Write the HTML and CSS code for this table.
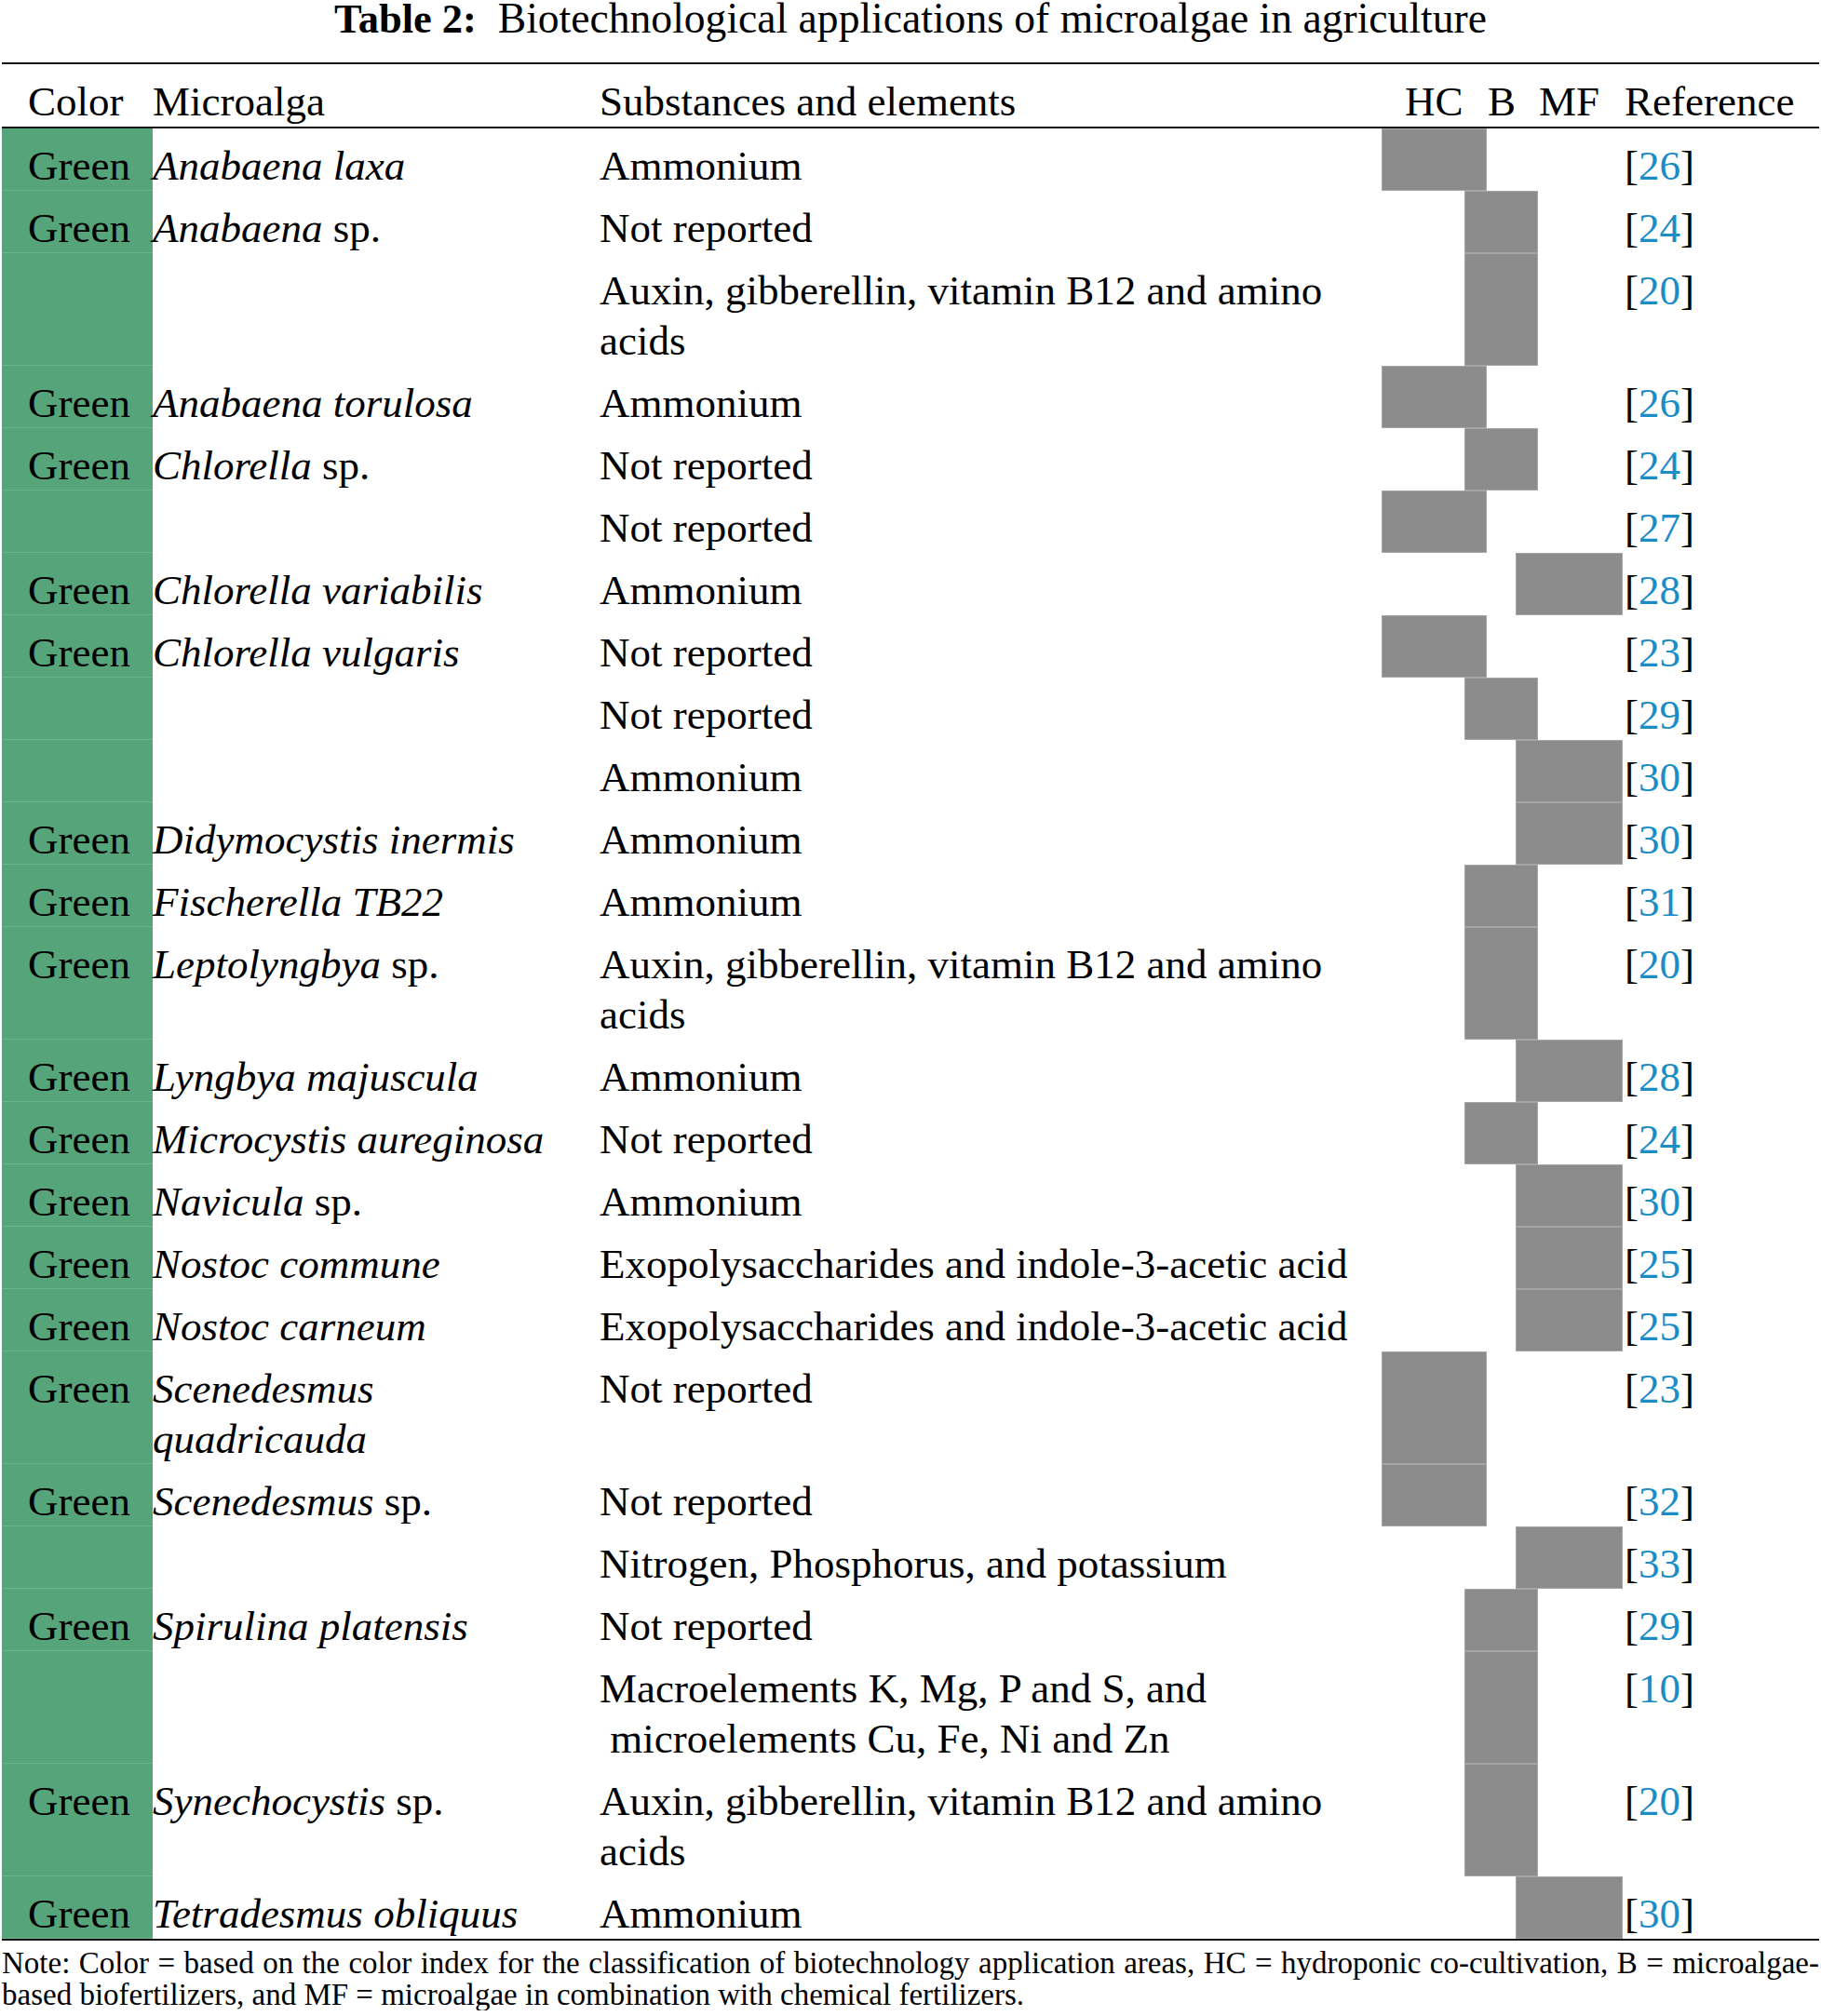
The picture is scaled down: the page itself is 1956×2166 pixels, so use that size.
FILE: index.html
```html
<!DOCTYPE html>
<html lang="en">
<head>
<meta charset="utf-8">
<title>Table 2: Biotechnological applications of microalgae in agriculture</title>
<link rel="stylesheet" href="styles.css">
</head>
<body>
<div class="page">
  <div class="caption"><b class="cap-label">Table 2:</b>&nbsp; Biotechnological applications of microalgae in agriculture</div>
  <div class="table">
    <div class="row head">
      <div class="cell c-color">Color</div>
      <div class="cell c-alga">Microalga</div>
      <div class="cell c-sub">Substances and elements</div>
      <div class="cell c-marks head-marks"><span>HC</span><span>B</span><span>MF</span></div>
      <div class="cell c-ref">Reference</div>
    </div>

    <div class="row">
      <div class="cell c-color green">Green</div>
      <div class="cell c-alga"><i>Anabaena laxa</i></div>
      <div class="cell c-sub">Ammonium</div>
      <div class="cell c-marks"><div class="mark hc"></div></div>
      <div class="cell c-ref">[<span class="num">26</span>]</div>
    </div>
    <div class="row">
      <div class="cell c-color green">Green</div>
      <div class="cell c-alga"><i>Anabaena</i> sp.</div>
      <div class="cell c-sub">Not reported</div>
      <div class="cell c-marks"><div class="mark b"></div></div>
      <div class="cell c-ref">[<span class="num">24</span>]</div>
    </div>
    <div class="row">
      <div class="cell c-color green"></div>
      <div class="cell c-alga"></div>
      <div class="cell c-sub">Auxin, gibberellin, vitamin B12 and amino acids</div>
      <div class="cell c-marks"><div class="mark b"></div></div>
      <div class="cell c-ref">[<span class="num">20</span>]</div>
    </div>
    <div class="row">
      <div class="cell c-color green">Green</div>
      <div class="cell c-alga"><i>Anabaena torulosa</i></div>
      <div class="cell c-sub">Ammonium</div>
      <div class="cell c-marks"><div class="mark hc"></div></div>
      <div class="cell c-ref">[<span class="num">26</span>]</div>
    </div>
    <div class="row">
      <div class="cell c-color green">Green</div>
      <div class="cell c-alga"><i>Chlorella</i> sp.</div>
      <div class="cell c-sub">Not reported</div>
      <div class="cell c-marks"><div class="mark b"></div></div>
      <div class="cell c-ref">[<span class="num">24</span>]</div>
    </div>
    <div class="row">
      <div class="cell c-color green"></div>
      <div class="cell c-alga"></div>
      <div class="cell c-sub">Not reported</div>
      <div class="cell c-marks"><div class="mark hc"></div></div>
      <div class="cell c-ref">[<span class="num">27</span>]</div>
    </div>
    <div class="row">
      <div class="cell c-color green">Green</div>
      <div class="cell c-alga"><i>Chlorella variabilis</i></div>
      <div class="cell c-sub">Ammonium</div>
      <div class="cell c-marks"><div class="mark mf"></div></div>
      <div class="cell c-ref">[<span class="num">28</span>]</div>
    </div>
    <div class="row">
      <div class="cell c-color green">Green</div>
      <div class="cell c-alga"><i>Chlorella vulgaris</i></div>
      <div class="cell c-sub">Not reported</div>
      <div class="cell c-marks"><div class="mark hc"></div></div>
      <div class="cell c-ref">[<span class="num">23</span>]</div>
    </div>
    <div class="row">
      <div class="cell c-color green"></div>
      <div class="cell c-alga"></div>
      <div class="cell c-sub">Not reported</div>
      <div class="cell c-marks"><div class="mark b"></div></div>
      <div class="cell c-ref">[<span class="num">29</span>]</div>
    </div>
    <div class="row">
      <div class="cell c-color green"></div>
      <div class="cell c-alga"></div>
      <div class="cell c-sub">Ammonium</div>
      <div class="cell c-marks"><div class="mark mf"></div></div>
      <div class="cell c-ref">[<span class="num">30</span>]</div>
    </div>
    <div class="row">
      <div class="cell c-color green">Green</div>
      <div class="cell c-alga"><i>Didymocystis inermis</i></div>
      <div class="cell c-sub">Ammonium</div>
      <div class="cell c-marks"><div class="mark mf"></div></div>
      <div class="cell c-ref">[<span class="num">30</span>]</div>
    </div>
    <div class="row">
      <div class="cell c-color green">Green</div>
      <div class="cell c-alga"><i>Fischerella TB22</i></div>
      <div class="cell c-sub">Ammonium</div>
      <div class="cell c-marks"><div class="mark b"></div></div>
      <div class="cell c-ref">[<span class="num">31</span>]</div>
    </div>
    <div class="row">
      <div class="cell c-color green">Green</div>
      <div class="cell c-alga"><i>Leptolyngbya</i> sp.</div>
      <div class="cell c-sub">Auxin, gibberellin, vitamin B12 and amino acids</div>
      <div class="cell c-marks"><div class="mark b"></div></div>
      <div class="cell c-ref">[<span class="num">20</span>]</div>
    </div>
    <div class="row">
      <div class="cell c-color green">Green</div>
      <div class="cell c-alga"><i>Lyngbya majuscula</i></div>
      <div class="cell c-sub">Ammonium</div>
      <div class="cell c-marks"><div class="mark mf"></div></div>
      <div class="cell c-ref">[<span class="num">28</span>]</div>
    </div>
    <div class="row">
      <div class="cell c-color green">Green</div>
      <div class="cell c-alga"><i>Microcystis aureginosa</i></div>
      <div class="cell c-sub">Not reported</div>
      <div class="cell c-marks"><div class="mark b"></div></div>
      <div class="cell c-ref">[<span class="num">24</span>]</div>
    </div>
    <div class="row">
      <div class="cell c-color green">Green</div>
      <div class="cell c-alga"><i>Navicula</i> sp.</div>
      <div class="cell c-sub">Ammonium</div>
      <div class="cell c-marks"><div class="mark mf"></div></div>
      <div class="cell c-ref">[<span class="num">30</span>]</div>
    </div>
    <div class="row">
      <div class="cell c-color green">Green</div>
      <div class="cell c-alga"><i>Nostoc commune</i></div>
      <div class="cell c-sub">Exopolysaccharides and indole-3-acetic acid</div>
      <div class="cell c-marks"><div class="mark mf"></div></div>
      <div class="cell c-ref">[<span class="num">25</span>]</div>
    </div>
    <div class="row">
      <div class="cell c-color green">Green</div>
      <div class="cell c-alga"><i>Nostoc carneum</i></div>
      <div class="cell c-sub">Exopolysaccharides and indole-3-acetic acid</div>
      <div class="cell c-marks"><div class="mark mf"></div></div>
      <div class="cell c-ref">[<span class="num">25</span>]</div>
    </div>
    <div class="row">
      <div class="cell c-color green">Green</div>
      <div class="cell c-alga"><i>Scenedesmus quadricauda</i></div>
      <div class="cell c-sub">Not reported</div>
      <div class="cell c-marks"><div class="mark hc"></div></div>
      <div class="cell c-ref">[<span class="num">23</span>]</div>
    </div>
    <div class="row">
      <div class="cell c-color green">Green</div>
      <div class="cell c-alga"><i>Scenedesmus</i> sp.</div>
      <div class="cell c-sub">Not reported</div>
      <div class="cell c-marks"><div class="mark hc"></div></div>
      <div class="cell c-ref">[<span class="num">32</span>]</div>
    </div>
    <div class="row">
      <div class="cell c-color green"></div>
      <div class="cell c-alga"></div>
      <div class="cell c-sub">Nitrogen, Phosphorus, and potassium</div>
      <div class="cell c-marks"><div class="mark mf"></div></div>
      <div class="cell c-ref">[<span class="num">33</span>]</div>
    </div>
    <div class="row">
      <div class="cell c-color green">Green</div>
      <div class="cell c-alga"><i>Spirulina platensis</i></div>
      <div class="cell c-sub">Not reported</div>
      <div class="cell c-marks"><div class="mark b"></div></div>
      <div class="cell c-ref">[<span class="num">29</span>]</div>
    </div>
    <div class="row">
      <div class="cell c-color green"></div>
      <div class="cell c-alga"></div>
      <div class="cell c-sub">Macroelements K, Mg, P and S, and<br>&nbsp;microelements Cu, Fe, Ni and Zn</div>
      <div class="cell c-marks"><div class="mark b"></div></div>
      <div class="cell c-ref">[<span class="num">10</span>]</div>
    </div>
    <div class="row">
      <div class="cell c-color green">Green</div>
      <div class="cell c-alga"><i>Synechocystis</i> sp.</div>
      <div class="cell c-sub">Auxin, gibberellin, vitamin B12 and amino acids</div>
      <div class="cell c-marks"><div class="mark b"></div></div>
      <div class="cell c-ref">[<span class="num">20</span>]</div>
    </div>
    <div class="row">
      <div class="cell c-color green">Green</div>
      <div class="cell c-alga"><i>Tetradesmus obliquus</i></div>
      <div class="cell c-sub">Ammonium</div>
      <div class="cell c-marks"><div class="mark mf"></div></div>
      <div class="cell c-ref">[<span class="num">30</span>]</div>
    </div>
  </div>
  <div class="note">
    <div class="note-line first">Note: Color = based on the color index for the classification of biotechnology application areas, HC = hydroponic co-cultivation, B = microalgae-</div>
    <div class="note-line">based biofertilizers, and MF = microalgae in combination with chemical fertilizers.</div>
  </div>
</div>
</body>
</html>
```

FILE: styles.css
```css
html, body {
  margin: 0;
  padding: 0;
  background: #ffffff;
}

body {
  font-family: "Liberation Serif", "Times New Roman", serif;
  color: #000000;
}

.page {
  width: 1952px;
  padding: 0 2px;
}

.caption {
  text-align: center;
  font-size: 45.6px;
  line-height: 40px;
  height: 40px;
  margin-bottom: 27px;
  white-space: nowrap;
}

.cap-label {
  font-size: 44.5px;
}

.table {
  border-top: 2px solid #111111;
  border-bottom: 2px solid #111111;
  font-size: 45px;
}

.row {
  display: grid;
  grid-template-columns: 162px 480px 840px 259px 211px;
}

.row.head {
  border-bottom: 2px solid #111111;
}

.cell {
  padding-top: 13px;
  line-height: 54px;
}

.c-color {
  padding-left: 28px;
}

.c-color.green {
  background: #56a479;
  box-shadow: inset 0 -1px 0 #6db38b;
}

.c-alga {
  padding-right: 16px;
}

.c-marks {
  display: flex;
  padding-top: 0;
}

.head-marks {
  display: grid;
  grid-template-columns: 89px 55px 115px;
  padding-top: 13px;
}

.head-marks span {
  padding-left: 25px;
}

.mark {
  background: #8c8c8d;
  box-shadow: inset 0 0 0 1px #a6a6a7;
}

.mark.hc {
  margin-left: 0;
  width: 113px;
}

.mark.b {
  margin-left: 89px;
  width: 79px;
}

.mark.mf {
  margin-left: 144px;
  width: 115px;
}

.c-ref {
  padding-left: 2px;
}

.num {
  color: #1a8cc6;
}

.note {
  font-size: 33px;
  line-height: 34px;
  margin-top: 7px;
}

.note-line.first {
  text-align: justify;
  text-align-last: justify;
}
```
